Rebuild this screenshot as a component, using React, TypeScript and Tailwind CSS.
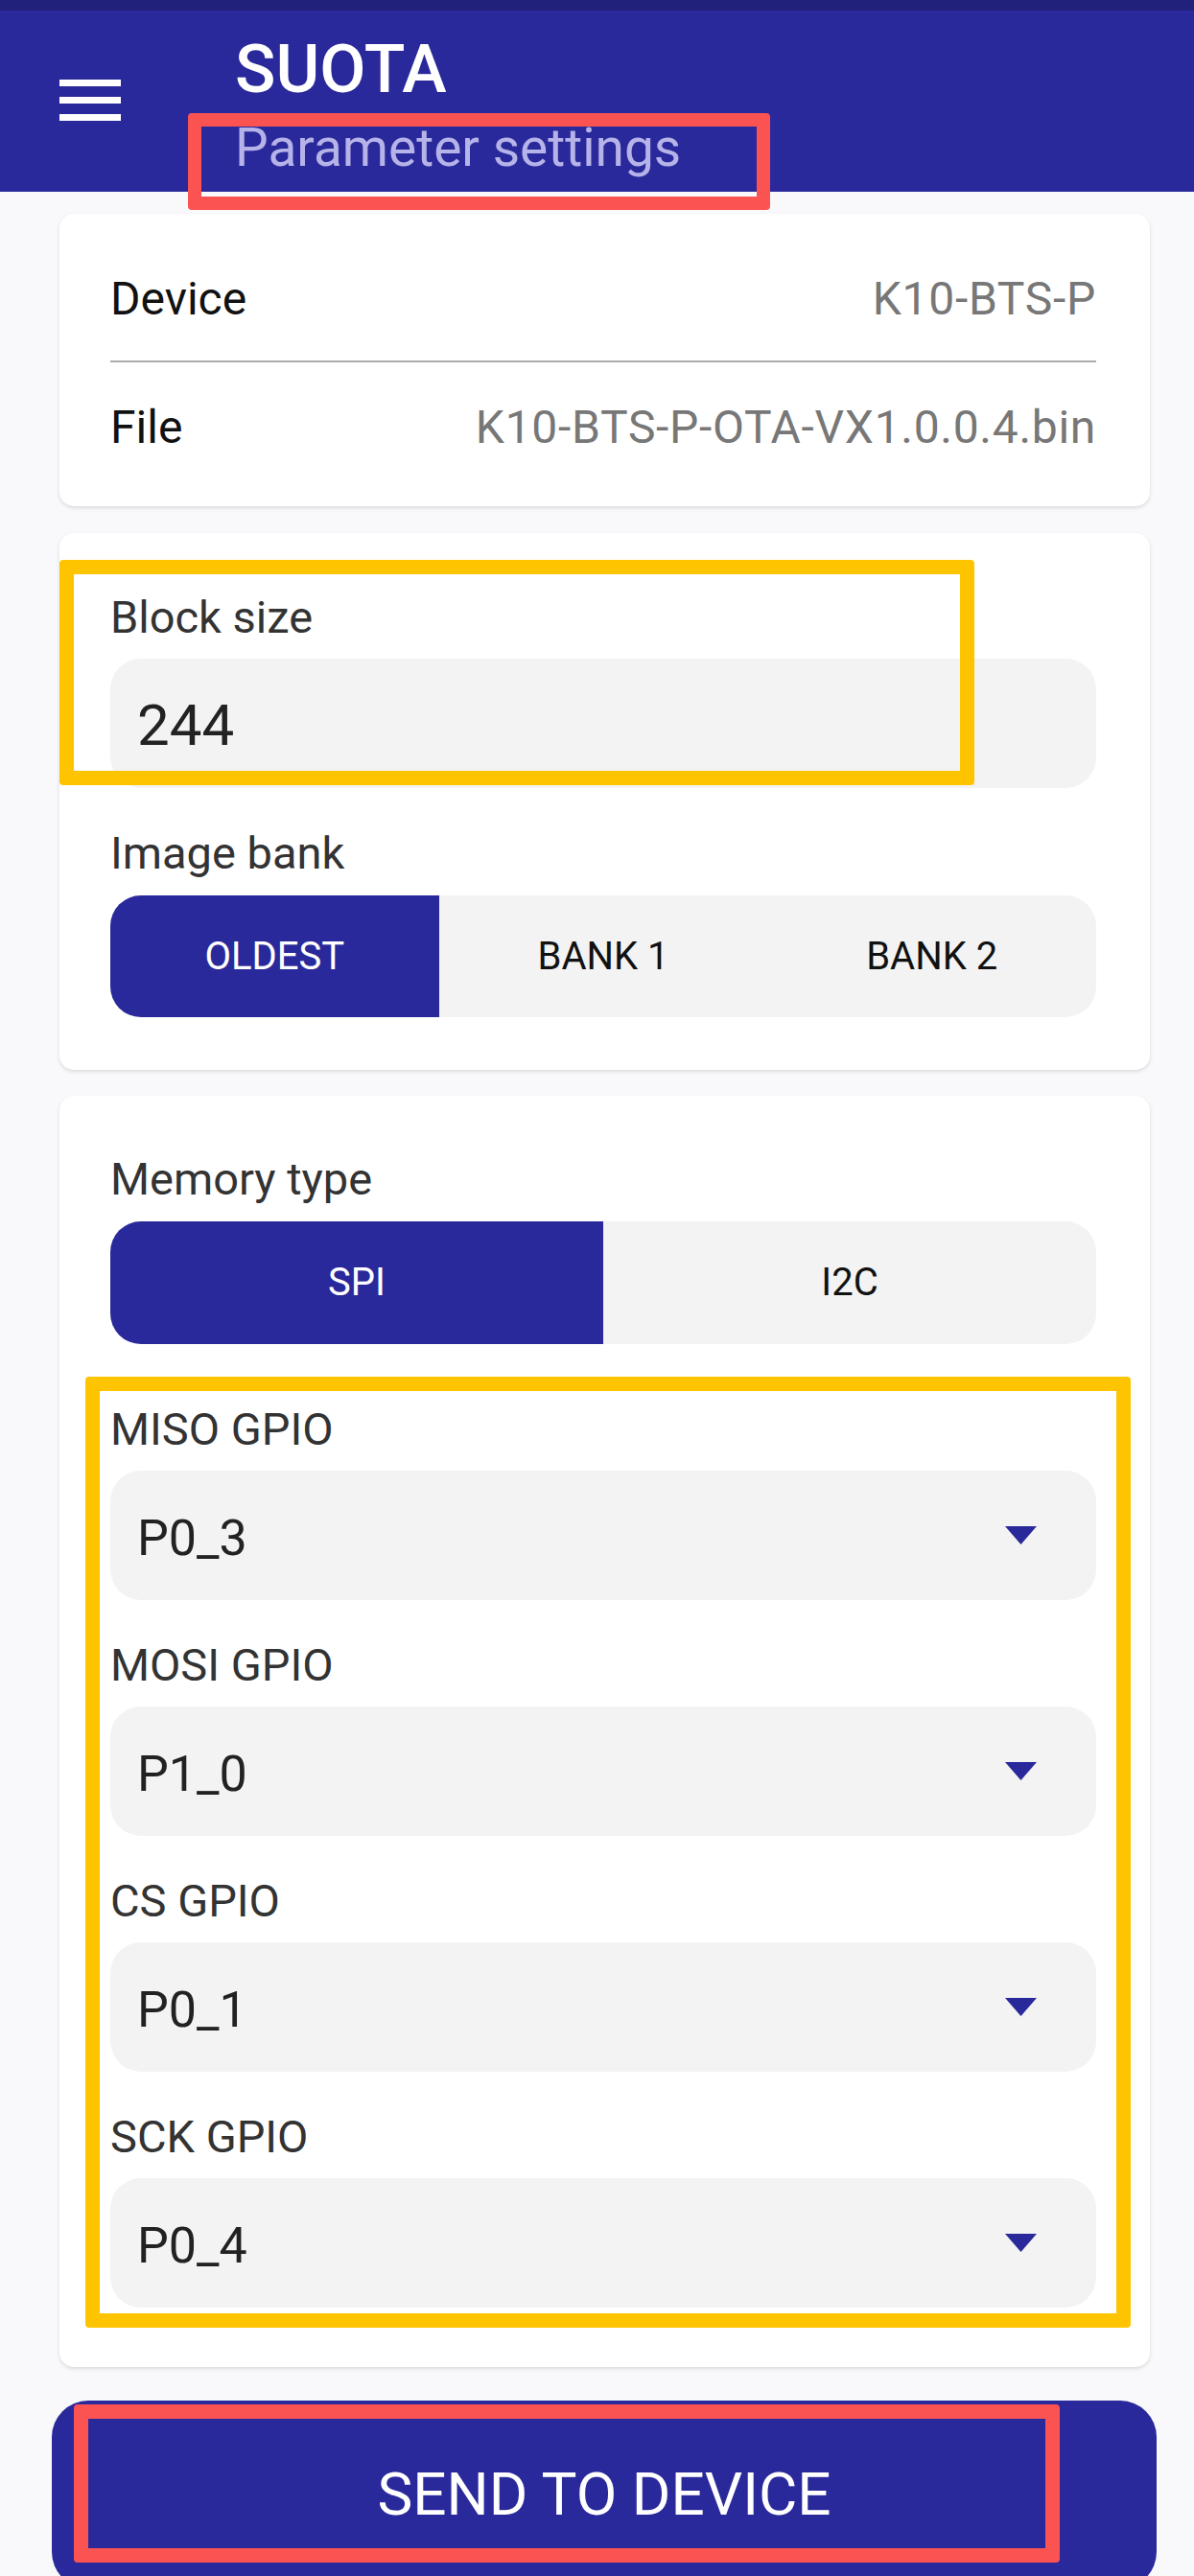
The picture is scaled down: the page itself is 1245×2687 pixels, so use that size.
import React from 'react';

const NAVY = 'bg-[#2a299b]';

const Label: React.FC<{ text: string }> = ({ text }) => (
  <div className="h-[56px] text-[47px] leading-[56px] text-[#333]">{text}</div>
);

const Segmented: React.FC<{ options: string[]; selected: number; height: string }> = ({
  options,
  selected,
  height,
}) => (
  <div className={`mt-[16px] flex overflow-hidden rounded-[32px] bg-[#f3f3f3] ${height}`}>
    {options.map((opt, i) => (
      <div
        key={opt}
        className={`flex flex-1 items-center justify-center text-[40px] ${
          i === selected ? 'bg-[#2a299b] text-white' : 'text-[#111]'
        }`}
      >
        {opt}
      </div>
    ))}
  </div>
);

const Dropdown: React.FC<{ label: string; value: string; first?: boolean }> = ({ label, value, first }) => (
  <div className={first ? '' : 'mt-[40px]'}>
    <Label text={label} />
    <div className="mt-[15px] flex h-[135px] items-center justify-between rounded-[32px] bg-[#f3f3f3] pl-[28px] pr-[62px]">
      <span className="mt-[7px] text-[52px] leading-[62px] text-[#222]">{value}</span>
      <svg width="33" height="19" viewBox="0 0 33 19">
        <polygon points="0,0 33,0 16.5,19" fill="#2a299b" />
      </svg>
    </div>
  </div>
);

const App: React.FC = () => {
  return (
    <div className="relative h-[2687px] w-full overflow-hidden bg-[#f9f9fb] font-['Roboto',sans-serif]">
      {/* status strip */}
      <div className="h-[11px] bg-[#21217c]" />

      {/* Toolbar */}
      <header className={`flex h-[189px] pl-[62px] ${NAVY}`}>
        <div className="mt-[72px] flex w-[64px] flex-col gap-[11px]">
          <span className="block h-[7px] bg-white" />
          <span className="block h-[7px] bg-white" />
          <span className="block h-[7px] bg-white" />
        </div>
        <div className="ml-[119px] pt-[21px]">
          <div className="text-[70px] font-medium leading-[80px] text-white">SUOTA</div>
          <div className="mt-[10px] text-[55px] leading-[64px] text-[#b5b3e8]">Parameter settings</div>
        </div>
      </header>

      {/* annotation over subtitle */}
      <div className="absolute left-[196px] top-[118px] h-[101px] w-[607px] rounded-[4px] border-[14px] border-[#fb5252]" />

      <main className="pl-[62px] pr-[46px] pt-[23px]">
        {/* Device / file */}
        <div className="rounded-[15px] bg-white pb-[54px] pl-[53px] pr-[56px] pt-[61px] shadow-[0_2px_4px_rgba(0,0,0,0.12)]">
          <div className="flex h-[56px] justify-between text-[48px] leading-[56px]">
            <span className="text-[#111]">Device</span>
            <span className="tracking-[0.7px] text-[#777]">K10-BTS-P</span>
          </div>
          <div className="mt-[36px] h-[2px] bg-[#ababab]" />
          <div className="mt-[40px] flex h-[56px] justify-between text-[48px] leading-[56px]">
            <span className="text-[#111]">File</span>
            <span className="tracking-[0.7px] text-[#777]">K10-BTS-P-OTA-VX1.0.0.4.bin</span>
          </div>
        </div>

        {/* Block size / image bank */}
        <div className="relative mt-[28px] rounded-[15px] bg-white pb-[55px] pl-[53px] pr-[56px] pt-[60px] shadow-[0_2px_4px_rgba(0,0,0,0.12)]">
          <Label text="Block size" />
          <div className="mt-[15px] h-[135px] rounded-[32px] bg-[#f3f3f3] pl-[28px] pt-[35px] text-[60px] leading-[70px] text-[#222]">
            244
          </div>
          <div className="mt-[40px]">
            <Label text="Image bank" />
          </div>
          <Segmented options={['OLDEST', 'BANK 1', 'BANK 2']} selected={0} height="h-[127px]" />
          <div className="absolute left-0 top-[28px] h-[235px] w-[954px] rounded-[4px] border-[15px] border-[#ffc400]" />
        </div>

        {/* Memory type + GPIOs */}
        <div className="relative mt-[27px] rounded-[15px] bg-white pb-[62px] pl-[53px] pr-[56px] pt-[59px] shadow-[0_2px_4px_rgba(0,0,0,0.12)]">
          <Label text="Memory type" />
          <Segmented options={['SPI', 'I2C']} selected={0} height="h-[128px]" />
          <div className="mt-[61px]">
            <Dropdown label="MISO GPIO" value="P0_3" first />
            <Dropdown label="MOSI GPIO" value="P1_0" />
            <Dropdown label="CS GPIO" value="P0_1" />
            <Dropdown label="SCK GPIO" value="P0_4" />
          </div>
          <div className="absolute left-[27px] top-[293px] h-[992px] w-[1090px] rounded-[4px] border-[15px] border-[#ffc400]" />
        </div>
      </main>

      <div className="mt-[35px] pl-[54px] pr-[39px]">
        <button className={`relative flex h-[196px] w-full justify-center rounded-[38px] pt-[62px] ${NAVY}`}>
          <span className="text-[62px] leading-[72px] text-white">SEND TO DEVICE</span>
          <span className="absolute left-[23px] top-[4px] h-[165px] w-[1028px] rounded-[4px] border-[15px] border-[#fb5252]" />
        </button>
      </div>
    </div>
  );
};

export default App;
